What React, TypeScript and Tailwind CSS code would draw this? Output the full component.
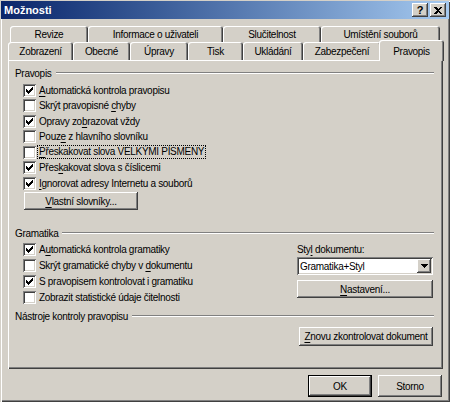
import React from "react"

const raised =
  "bg-[#d4d0c8] shadow-[inset_-1px_-1px_#404040,inset_1px_1px_#ffffff,inset_-2px_-2px_#808080,inset_2px_2px_#d4d0c8]"
const sunken = "shadow-[inset_1px_1px_#808080,inset_-1px_-1px_#ffffff,inset_2px_2px_#404040,inset_-2px_-2px_#d4d0c8]"
const tabShape =
  "bg-[#d4d0c8] rounded-t-[3px] shadow-[inset_1px_1px_#ffffff,inset_-1px_0_#404040,inset_-2px_0_#808080]"

// text with an underlined access key
function Mn({ text, u = -1 }: { text: string; u?: number }) {
  if (u < 0) return <span className="whitespace-nowrap">{text}</span>
  return (
    <span className="whitespace-nowrap">
      {text.slice(0, u)}
      <span className="underline underline-offset-[2px]">{text[u]}</span>
      {text.slice(u + 1)}
    </span>
  )
}

function Box({ checked }: { checked?: boolean }) {
  return (
    <span className={`w-[13px] h-[13px] bg-white shrink-0 flex items-center justify-center ${sunken}`}>
      {checked && (
        <svg width="7" height="7" viewBox="0 0 7 7" shapeRendering="crispEdges">
          {[2, 3, 4, 3, 2, 1, 0].map((y, x) => (
            <rect key={x} x={x} y={y} width="1" height="3" fill="#000" />
          ))}
        </svg>
      )}
    </span>
  )
}

type Row = { t: string; u?: number; c?: boolean; h: string; focus?: boolean }

function CheckRow({ row }: { row: Row }) {
  return (
    <div className={`${row.h} flex items-center`}>
      <Box checked={row.c} />
      <span className={row.focus ? "ml-[1px] border border-dotted border-black px-[1px] leading-[12px]" : "pl-[3px]"}>
        <Mn text={row.t} u={row.u} />
      </span>
    </div>
  )
}

function Group({ title }: { title: string }) {
  return (
    <div className="h-[14px] flex items-center gap-[4px] pl-[7px] pr-[9px]">
      <span>{title}</span>
      <div className="flex-1 h-[2px] border-t border-t-[#808080] border-b border-b-white" />
    </div>
  )
}

const spelling: Row[] = [
  { t: "Automatická kontrola pravopisu", u: 0, c: true, h: "h-[16px]" },
  { t: "Skrýt pravopisné chyby", u: 17, h: "h-[15px]" },
  { t: "Opravy zobrazovat vždy", u: 9, c: true, h: "h-[16px]" },
  { t: "Pouze z hlavního slovníku", u: 4, h: "h-[15px]" },
  { t: "Přeskakovat slova VELKÝMI PÍSMENY", u: 0, h: "h-[16px]", focus: true },
  { t: "Přeskakovat slova s číslicemi", u: 4, c: true, h: "h-[15px]" },
  { t: "Ignorovat adresy Internetu a souborů", u: 0, c: true, h: "h-[16px]" },
]

const grammar: Row[] = [
  { t: "Automatická kontrola gramatiky", u: 1, c: true, h: "h-[16px]" },
  { t: "Skrýt gramatické chyby v dokumentu", u: 25, h: "h-[16px]" },
  { t: "S pravopisem kontrolovat i gramatiku", c: true, h: "h-[16px]" },
  { t: "Zobrazit statistické údaje čitelnosti", h: "h-[16px]" },
]

export default function App() {
  return (
    <div className="w-[450px] h-[402px] bg-[#d4d0c8] text-[10px] tracking-[-0.3px] text-black font-['Liberation_Sans',Arial,sans-serif] shadow-[inset_1px_1px_#d4d0c8,inset_2px_2px_#ffffff,inset_-1px_-1px_#404040,inset_-2px_-2px_#808080] overflow-hidden select-none">
      {/* title bar */}
      <div className="mx-[1px] mt-[1px] h-[18px] flex items-center pl-[3px] pr-[3px] bg-gradient-to-r from-[#0a246a] to-[#a6caf0]">
        <span className="font-bold text-white flex-1 text-[11px] tracking-normal">Možnosti</span>
        <div className="flex gap-[2px]">
          <div className={`w-[16px] h-[14px] flex items-center justify-center font-bold text-[11px] tracking-normal leading-none ${raised}`}>
            ?
          </div>
          <div className={`w-[16px] h-[14px] flex items-center justify-center ${raised}`}>
            <svg width="8" height="7" viewBox="0 0 8 7" shapeRendering="crispEdges">
              <path d="M0 0h2l2 2 2-2h2L5 3.5 8 7H6L4 5 2 7H0l3-3.5z" fill="#000" />
            </svg>
          </div>
        </div>
      </div>

      <div className="pl-[8px] mt-[7px]">
        {/* tabs */}
        <div className="flex pl-[2px]">
          <div className={`w-[78px] h-[17px] flex items-center justify-center ${tabShape}`}>Revize</div>
          <div className={`w-[135px] h-[17px] flex items-center justify-center ${tabShape}`}>Informace o uživateli</div>
          <div className={`w-[98px] h-[17px] flex items-center justify-center ${tabShape}`}>Slučitelnost</div>
          <div className={`w-[119px] h-[17px] flex items-center justify-center ${tabShape}`}>Umístění souborů</div>
        </div>
        <div className="flex items-start h-[18px] -mt-[1px] relative z-10">
          <div className={`w-[65px] h-[18px] flex items-center justify-center ${tabShape}`}>Zobrazení</div>
          <div className={`w-[57px] h-[18px] flex items-center justify-center ${tabShape}`}>Obecné</div>
          <div className={`w-[58px] h-[18px] flex items-center justify-center ${tabShape}`}>Úpravy</div>
          <div className={`w-[55px] h-[18px] flex items-center justify-center ${tabShape}`}>Tisk</div>
          <div className={`w-[60px] h-[18px] flex items-center justify-center ${tabShape}`}>Ukládání</div>
          <div className={`w-[78px] h-[18px] flex items-center justify-center ${tabShape}`}>Zabezpečení</div>
          <div className={`w-[65px] h-[21px] -ml-[2px] -mt-[2px] pt-[1px] flex items-center justify-center relative z-20 ${tabShape}`}>
            Pravopis
          </div>
        </div>

        {/* panel */}
        <div className="w-[435px] h-[309px] pt-[6px] shadow-[inset_1px_1px_#ffffff,inset_-1px_-1px_#404040,inset_-2px_-2px_#808080]">
          <Group title="Pravopis" />
          <div className="pl-[15px] mt-[2px]">
            {spelling.map((r) => (
              <CheckRow key={r.t} row={r} />
            ))}
            <div className={`mt-[1px] ml-[1px] w-[114px] h-[18px] flex items-center justify-center ${raised}`}>
              <Mn text="Vlastní slovníky..." u={0} />
            </div>
          </div>

          <div className="mt-[16px]">
            <Group title="Gramatika" />
          </div>
          <div className="flex mt-[1px] pr-[10px]">
            <div className="flex-1 pl-[15px]">
              {grammar.map((r) => (
                <CheckRow key={r.t} row={r} />
              ))}
            </div>
            <div className="w-[136px]">
              <div className="h-[16px] flex items-center">
                <Mn text="Styl dokumentu:" u={3} />
              </div>
              <div className={`h-[18px] bg-white flex items-center pl-[3px] pr-[2px] ${sunken}`}>
                <span className="flex-1">Gramatika+Styl</span>
                <div className={`w-[14px] h-[14px] flex items-center justify-center ${raised}`}>
                  <svg width="7" height="4" viewBox="0 0 7 4" shapeRendering="crispEdges">
                    <path d="M0 0h7L3.5 4z" fill="#000" />
                  </svg>
                </div>
              </div>
              <div className={`mt-[5px] h-[18px] flex items-center justify-center ${raised}`}>
                <Mn text="Nastavení..." u={0} />
              </div>
            </div>
          </div>

          <div className="mt-[4px]">
            <Group title="Nástroje kontroly pravopisu" />
          </div>
          <div className="flex justify-end pr-[10px] mt-[4px]">
            <div className={`w-[134px] h-[19px] flex items-center justify-center ${raised}`}>
              <Mn text="Znovu zkontrolovat dokument" u={0} />
            </div>
          </div>
        </div>

        {/* dialog buttons */}
        <div className="w-[435px] flex justify-end gap-[6px] pr-[1px] mt-[6px]">
          <div className="w-[64px] h-[22px] border border-black">
            <div className={`w-full h-full flex items-center justify-center ${raised}`}>OK</div>
          </div>
          <div className={`w-[64px] h-[22px] flex items-center justify-center ${raised}`}>Storno</div>
        </div>
      </div>
    </div>
  )
}
